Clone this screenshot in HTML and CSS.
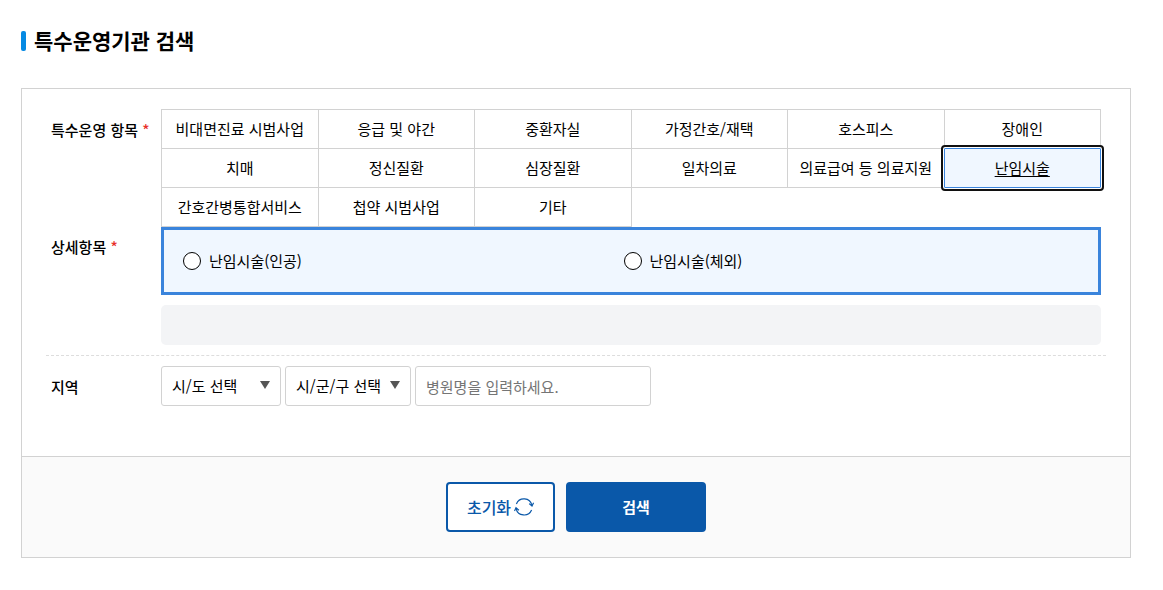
FILE: index.html
```html
<!DOCTYPE html>
<html lang="ko">
<head>
    <meta charset="UTF-8">
    <meta name="viewport" content="width=device-width, initial-scale=1.0">
    <title>특수운영기관 검색</title>
    <link rel="stylesheet" href="styles.css">
</head>
<body>
    <main class="container">
        <h1 class="page-title">특수운영기관 검색</h1>

        <form class="search-box">
            <div class="search-body">
                <div class="search-row">
                    <div class="row-label" id="item-label">특수운영 항목 <span class="required">*</span></div>
                    <div class="item-list" role="group" aria-labelledby="item-label">
                        <button type="button" class="item">비대면진료 시범사업</button>
                        <button type="button" class="item">응급 및 야간</button>
                        <button type="button" class="item">중환자실</button>
                        <button type="button" class="item">가정간호/재택</button>
                        <button type="button" class="item">호스피스</button>
                        <button type="button" class="item">장애인</button>
                        <button type="button" class="item">치매</button>
                        <button type="button" class="item">정신질환</button>
                        <button type="button" class="item">심장질환</button>
                        <button type="button" class="item">일차의료</button>
                        <button type="button" class="item">의료급여 등 의료지원</button>
                        <button type="button" class="item active" aria-pressed="true">난임시술</button>
                        <button type="button" class="item">간호간병통합서비스</button>
                        <button type="button" class="item">첩약 시범사업</button>
                        <button type="button" class="item">기타</button>
                    </div>
                </div>

                <div class="search-row">
                    <div class="row-label" id="detail-label">상세항목 <span class="required">*</span></div>
                    <div class="detail">
                        <div class="detail-list" role="radiogroup" aria-labelledby="detail-label">
                            <label class="radio"><input type="radio" name="detail" value="1">난임시술(인공)</label>
                            <label class="radio"><input type="radio" name="detail" value="2">난임시술(체외)</label>
                        </div>
                        <div class="selected-list"></div>
                    </div>
                </div>

                <div class="search-row region">
                    <div class="row-label" id="region-label">지역</div>
                    <div class="region-fields" role="group" aria-labelledby="region-label">
                        <div class="select">
                            <select class="sido" aria-label="시/도">
                                <option>시/도 선택</option>
                            </select>
                        </div>
                        <div class="select">
                            <select class="sigungu" aria-label="시/군/구">
                                <option>시/군/구 선택</option>
                            </select>
                        </div>
                        <input type="text" class="hospital" aria-label="병원명" placeholder="병원명을 입력하세요.">
                    </div>
                </div>
            </div>

            <div class="search-buttons">
                <button type="reset" class="btn btn-reset">초기화
                    <svg class="icon" viewBox="0 0 20 20" width="20" height="20" aria-hidden="true">
                        <path d="M2.4 6.9A8.2 8.2 0 0 1 17.9 8.2"/>
                        <path d="M15.2 6.6L18 9L19.6 5.8"/>
                        <path d="M17.6 13.1A8.2 8.2 0 0 1 2.1 11.6"/>
                        <path d="M.5 14L2 10.8L4.9 13.2"/>
                    </svg>
                </button>
                <button type="submit" class="btn btn-search">검색</button>
            </div>
        </form>
    </main>
</body>
</html>
```

FILE: styles.css
```css
* {
    box-sizing: border-box;
}
body {
    margin: 0;
    background-color: #fff;
    color: #000;
    font-family: "Noto Sans CJK KR", sans-serif;
    font-size: 15px;
    line-height: 22px;
}
button, input, select {
    margin: 0;
    font: inherit;
    color: inherit;
}
.container {
    padding: 24px 32px 32px 21px;
}
.page-title {
    display: flex;
    align-items: center;
    gap: 8px;
    margin: 0 0 32px;
    font-size: 21px;
    font-weight: 700;
    line-height: 32px;
}
.page-title::before {
    content: "";
    width: 5px;
    height: 20px;
    margin-top: 2px;
    border-radius: 2px;
    background-color: #068ae3;
}
.search-box {
    border: 1px solid #d2d2d2;
}
.search-body {
    padding: 20px 24px 50px;
}
.search-row {
    display: grid;
    grid-template-columns: 110px 1fr;
    padding: 0 5px;
}
.row-label {
    padding-top: 10px;
    font-weight: 500;
}
.required {
    color: #e8302a;
}

/* 특수운영 항목 */
.item-list {
    display: grid;
    grid-template-columns: repeat(6, 1fr);
    padding-right: 1px;
}
.item {
    height: 40px;
    margin: 0 -1px -1px 0;
    padding: 0;
    border: 1px solid #d2d2d2;
    background-color: #fff;
    white-space: nowrap;
    cursor: pointer;
}
.item.active {
    z-index: 1;
    border-color: #3a84dc;
    border-radius: 1px;
    background-color: #f0f7ff;
    box-shadow: 0 0 0 2px #fff;
    outline: 2px solid #101010;
    outline-offset: 1px;
    text-decoration: underline;
    text-underline-offset: 2px;
}

/* 상세항목 */
.detail {
    padding-top: 1px;
}
.detail-list {
    display: grid;
    grid-template-columns: repeat(2, 1fr);
    align-items: center;
    height: 68px;
    padding: 0 34px 0 19px;
    border: 3px solid #3a84dc;
    background-color: #f0f7ff;
}
.radio {
    display: flex;
    align-items: center;
    gap: 8px;
}
.radio input {
    appearance: none;
    width: 18px;
    height: 18px;
    border: 1px solid #000;
    border-radius: 50%;
    background-color: #fff;
}
.radio input:checked {
    border: 5px solid #3a84dc;
}
.selected-list {
    height: 40px;
    margin: 10px 0;
    border-radius: 5px;
    background-color: #f3f4f6;
}

/* 지역 */
.region {
    padding-top: 10px;
    border-top: 1px dashed #ddd;
}
.region-fields {
    display: flex;
    gap: 4px;
}
.select {
    position: relative;
}
.select::after {
    content: "";
    position: absolute;
    top: 15px;
    right: 11px;
    border: 5px solid transparent;
    border-top: 8px solid #555;
    border-bottom: 0;
    pointer-events: none;
}
.region-fields select,
.hospital {
    height: 40px;
    padding: 0 10px;
    border: 1px solid #d2d2d2;
    border-radius: 3px;
    background-color: #fff;
}
.region-fields select {
    appearance: none;
}
.sido {
    width: 120px;
}
.sigungu {
    width: 126px;
}
.hospital {
    width: 236px;
}
.hospital::placeholder {
    color: #757575;
}

/* 버튼 */
.search-buttons {
    display: flex;
    justify-content: center;
    gap: 11px;
    padding: 25px 0;
    border-top: 1px solid #d2d2d2;
    background-color: #fafafa;
}
.btn {
    display: flex;
    align-items: center;
    justify-content: center;
    gap: 3px;
    height: 50px;
    border: 2px solid #0a58a9;
    border-radius: 4px;
    cursor: pointer;
}
.btn-reset {
    width: 109px;
    padding: 0;
    background-color: #fff;
    color: #0a58a9;
    font-size: 16px;
    font-weight: 500;
}
.btn-search {
    width: 140px;
    background-color: #0a58a9;
    color: #fff;
    font-weight: 700;
}
.icon {
    fill: none;
    stroke: currentColor;
    stroke-width: 1.2;
}
```
